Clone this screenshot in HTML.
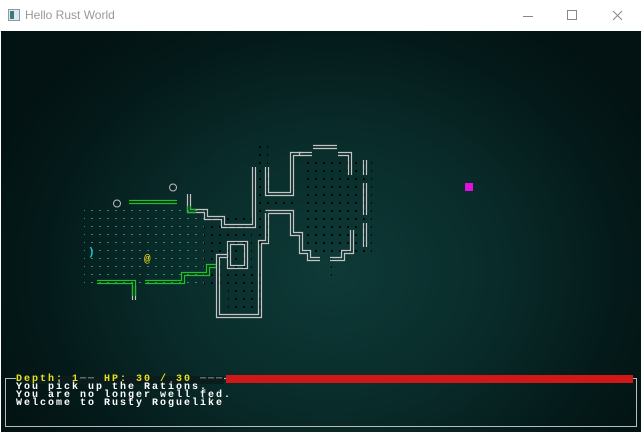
<!DOCTYPE html>
<html><head><meta charset="utf-8"><style>
html,body{margin:0;padding:0;width:642px;height:432px;overflow:hidden;background:#fff;}
#title{position:absolute;left:0;top:0;width:642px;height:31px;background:#fff;border-bottom:1px solid #ddd;}
#title .t{position:absolute;left:25px;top:8px;font:12px "Liberation Sans",sans-serif;color:#999;}
#game{position:absolute;left:1px;top:31px;width:640px;height:401px;
background:radial-gradient(ellipse 360px 300px at 330px 240px,#0e3a37 0%,#092c2a 45%,#041a1a 80%,#031313 100%);}
.txt{position:absolute;font:bold 10px/8px "Liberation Mono",monospace;letter-spacing:2px;white-space:pre;color:#fff;}
</style></head><body>
<div id="title">
<svg width="642" height="31" style="position:absolute;left:0;top:0">
<rect x="8.5" y="9.5" width="11" height="11" fill="#dfe7ee" stroke="#8a9aa6"/>
<rect x="10" y="11" width="4" height="8" fill="#3a7a7a"/>
<line x1="523" y1="16.5" x2="533" y2="16.5" stroke="#888"/>
<rect x="567.5" y="10.5" width="9" height="9" fill="none" stroke="#888"/>
<path d="M613 11 L622 20 M622 11 L613 20" stroke="#888"/>
</svg>
<div class="t">Hello Rust World</div>
</div>
<div id="game">
<svg width="640" height="401" style="position:absolute;left:0;top:0">
<defs>
<pattern id="td" x="3" y="2" width="8" height="8" patternUnits="userSpaceOnUse"><rect width="2" height="1" fill="#2a8a7e"/></pattern>
<pattern id="dd" x="3" y="2" width="8" height="8" patternUnits="userSpaceOnUse"><rect width="2" height="2" fill="#020808"/></pattern>
</defs>
<g transform="translate(-1,-31)">
<rect x="84" y="210" width="120" height="80" fill="url(#td)"/>
<rect x="204" y="218" width="48" height="70" fill="url(#dd)"/>
<rect x="256" y="140" width="12" height="110" fill="url(#dd)"/>
<rect x="268" y="200" width="25" height="8" fill="url(#dd)"/>
<rect x="302" y="158" width="70" height="100" fill="url(#dd)"/>
<rect x="228" y="272" width="32" height="40" fill="url(#dd)"/>
<rect x="328" y="258" width="4" height="24" fill="url(#dd)"/>
<g fill="none" stroke="#c4c4c4" stroke-width="1.2">
<path d="M313 145.5H337M313 148.5H337"/>
<path d="M187.5 194V212.5H204.5V219.5H221.5V227.5H255.5V167M190.5 194V209.5H207.5V216.5H224.5V224.5H252.5V167"/>
<path d="M265.5 167V195.5H293.5V168M268.5 167V192.5H290.5V168"/>
<path d="M290.5 168V152.5H302.5M293.5 168V155.5H302.5"/>
<path d="M299.5 155V152.5H312M302.5 155V155.5H312"/>
<path d="M338 152.5H351.5V175M338 155.5H348.5V175"/>
<path d="M363.5 160V175M366.5 160V175M363.5 183V215M366.5 183V215M363.5 223V247M366.5 223V247"/>
<path d="M265.5 210.5H293.5V232.5H302.5V250.5H310.5V257.5H320M268.5 213.5H290.5V235.5H299.5V253.5H307.5V260.5H320"/>
<path d="M330 257.5H341.5V250.5H350.5V230M330 260.5H344.5V253.5H353.5V230"/>
<path d="M265.5 213V240.5H258.5V314.5H219.5V263M268.5 213V243.5H261.5V317.5H216.5V263"/>
<rect x="227.5" y="241.5" width="20" height="27"/><rect x="230.5" y="244.5" width="14" height="21"/>
<path d="M219.5 263V257.5H228M216.5 263V254.5H228"/>
<path d="M135.5 286V300M132.5 286V300"/>
</g>
<circle cx="117" cy="203.5" r="3.5" fill="none" stroke="#bbb"/>
<circle cx="173" cy="187.5" r="3.5" fill="none" stroke="#bbb"/>
<g fill="none" stroke="#22c022" stroke-width="1.2">
<path d="M129 200.5H177M129 203.5H177"/>
<path d="M97 280.5H135.5V296M97 283.5H132.5V296"/>
<path d="M145 280.5H181.5V272.5H206.5V264.5H216M145 283.5H184.5V275.5H209.5V267.5H216"/>
<path d="M187.5 206V212.5H196M190.5 206V209.5H196"/>
</g>
<text x="88" y="255" font-family="Liberation Mono,monospace" font-weight="bold" font-size="11" fill="#19c8d8">)</text>
<text x="144" y="262" font-family="Liberation Mono,monospace" font-weight="bold" font-size="11" fill="#e0d020">@</text>
<rect x="465" y="183" width="8" height="8" fill="#e010e0"/>
<rect x="5.5" y="378.5" width="631" height="48" fill="none" stroke="#bbb"/>
<rect x="226" y="375" width="407" height="8" fill="#d01818"/>
</g>
</svg>
</div>
<div class="txt" style="left:16px;top:376px;color:#e8e020;background:#0a1c1c">Depth: 1<span style="color:#bbb">──</span> HP: 30 / 30 <span style="color:#bbb">───</span></div>
<div class="txt" style="left:16px;top:384px">You pick up the Rations.</div>
<div class="txt" style="left:16px;top:392px">You are no longer well fed.</div>
<div class="txt" style="left:16px;top:400px">Welcome to Rusty Roguelike</div>
</body></html>
